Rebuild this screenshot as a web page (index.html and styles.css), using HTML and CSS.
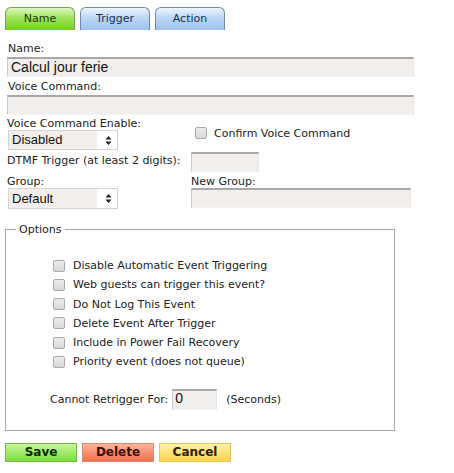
FILE: index.html
```html
<!DOCTYPE html>
<html>
<head>
<meta charset="utf-8">
<link rel="stylesheet" href="styles.css">
</head>
<body>
<div class="page">
  <div class="tabs">
    <div class="tab tab-active">Name</div>
    <div class="tab">Trigger</div>
    <div class="tab">Action</div>
  </div>

  <div class="form">
    <div class="label l-name">Name:</div>
    <div class="input wide">Calcul jour ferie</div>
    <div class="label l-voice">Voice Command:</div>
    <div class="input wide"></div>

    <div class="row r-enable">
      <div class="col-left">
        <div class="label">Voice Command Enable:</div>
        <div class="select"><span>Disabled</span><svg class="arrows" width="7" height="11" viewBox="0 0 7 11"><path d="M3.5 1 L6.5 4.5 H0.5 Z M3.5 10 L6.5 6.5 H0.5 Z" fill="#222"/></svg></div>
      </div>
      <div class="col-right confirm">
        <span class="cb"></span><span class="cb-text">Confirm Voice Command</span>
      </div>
    </div>

    <div class="row r-dtmf">
      <div class="label dtmf-label">DTMF Trigger (at least 2 digits):</div>
      <div class="input small"></div>
    </div>

    <div class="row r-group">
      <div class="col-left">
        <div class="label">Group:</div>
        <div class="select sel-group"><span>Default</span><svg class="arrows" width="7" height="11" viewBox="0 0 7 11"><path d="M3.5 1 L6.5 4.5 H0.5 Z M3.5 10 L6.5 6.5 H0.5 Z" fill="#222"/></svg></div>
      </div>
      <div class="col-right">
        <div class="label">New Group:</div>
        <div class="input group"></div>
      </div>
    </div>

    <fieldset class="options">
      <legend>Options</legend>
      <div class="checks">
        <div class="check"><span class="cb"></span>Disable Automatic Event Triggering</div>
        <div class="check"><span class="cb"></span>Web guests can trigger this event?</div>
        <div class="check"><span class="cb"></span>Do Not Log This Event</div>
        <div class="check"><span class="cb"></span>Delete Event After Trigger</div>
        <div class="check"><span class="cb"></span>Include in Power Fail Recovery</div>
        <div class="check"><span class="cb"></span>Priority event (does not queue)</div>
      </div>
      <div class="retrigger">
        <span class="rt-label">Cannot Retrigger For:</span>
        <div class="input rt">0</div>
        <span class="rt-unit">(Seconds)</span>
      </div>
    </fieldset>

    <div class="buttons">
      <div class="btn save">Save</div>
      <div class="btn delete">Delete</div>
      <div class="btn cancel">Cancel</div>
    </div>
  </div>
</div>
</body>
</html>
```

FILE: styles.css
```css
html, body {
  margin: 0;
  padding: 0;
  background: #ffffff;
}
body {
  font-family: "DejaVu Sans", Verdana, sans-serif;
  font-size: 11px;
  color: #222;
}
.page {
  width: 454px;
  height: 473px;
  position: relative;
  overflow: hidden;
}
.tabs {
  display: flex;
  gap: 5px;
  padding: 7px 0 0 5px;
  height: 23px;
}
.tab {
  width: 68px;
  height: 22px;
  border: 1px solid #6f8aa6;
  border-bottom: none;
  border-radius: 6px 6px 0 0;
  background: linear-gradient(#eef5fd 0%, #bcd6f4 45%, #9ec3ef 100%);
  font-size: 11px;
  color: #13325a;
  text-align: center;
  line-height: 22px;
}
.tab-active {
  border-color: #7c9f56;
  background: linear-gradient(#dff7c2 0%, #9fe45a 45%, #71d21f 100%);
  color: #17380a;
}
.form {
  padding: 0 0 0 7px;
}
.label {
  height: 12px;
  line-height: 12px;
  color: #222;
}
.l-name {
  margin-top: 13px;
  padding-left: 1px;
}
.l-voice {
  margin-top: 4px;
  padding-left: 1px;
}
.input {
  box-sizing: border-box;
  background: #f1eeeb;
  border-top: 2px solid #a8a8a8;
  border-left: 1px solid #c9c9c9;
  border-right: 1px solid #e6e6e6;
  border-bottom: 1px solid #f4f4f4;
  font-family: "Liberation Sans", Arial, sans-serif;
  font-size: 14px;
  color: #111;
  padding-left: 3px;
  line-height: 16px;
}
.wide {
  width: 407px;
  height: 20px;
  margin-top: 2px;
}
.row {
  display: flex;
}
.col-left {
  width: 184px;
}
.r-enable {
  margin-top: 3px;
}
.select {
  box-sizing: border-box;
  width: 110px;
  height: 20px;
  margin-left: 1px;
  border: 1px solid #d4d4d4;
  background: linear-gradient(90deg, #f1eeeb 0, #f1eeeb 88px, #ffffff 88px);
  font-family: "Liberation Sans", Arial, sans-serif;
  font-size: 13px;
  color: #111;
  line-height: 18px;
  padding-left: 3px;
  position: relative;
}
.sel-group {
  height: 21px;
  line-height: 19px;
}
.arrows {
  position: absolute;
  right: 5px;
  top: 4px;
}
.confirm {
  display: flex;
  align-items: center;
  margin-top: 9px;
  height: 12px;
  padding-left: 4px;
}
.cb {
  display: inline-block;
  box-sizing: border-box;
  width: 12px;
  height: 12px;
  border: 1px solid #a9a9a9;
  border-radius: 2px;
  background: linear-gradient(#ececec, #d8d8d8);
  flex: none;
}
.cb-text {
  margin-left: 7px;
}
.r-dtmf {
  margin-top: 2px;
  align-items: flex-end;
}
.dtmf-label {
  width: 184px;
  margin-bottom: 5px;
}
.small {
  width: 68px;
  height: 20px;
}
.r-group {
  margin-top: 4px;
}
.group {
  width: 220px;
  height: 20px;
}
.options {
  box-sizing: border-box;
  width: 390px;
  height: 208px;
  margin: 14px 0 0 -2px;
  padding: 0;
  border: 1px solid #a8a8a8;
}
.options legend {
  margin-left: 10px;
  padding: 0 4px 0 3px;
  font-size: 11px;
  line-height: 13px;
}
.checks {
  margin: 23px 0 0 47px;
  display: flex;
  flex-direction: column;
  gap: 6.3px;
}
.check {
  display: flex;
  align-items: center;
  height: 13px;
}
.check .cb {
  margin-right: 8px;
}
.retrigger {
  display: flex;
  align-items: center;
  margin: 21px 0 0 44px;
}
.rt {
  width: 45px;
  height: 21px;
  margin-left: 4px;
  padding-left: 2px;
  line-height: 14px;
}
.rt-unit {
  margin-left: 9px;
}
.buttons {
  display: flex;
  gap: 5px;
  margin: 12px 0 0 -2px;
}
.btn {
  box-sizing: border-box;
  width: 72px;
  height: 19px;
  font-weight: bold;
  font-size: 12px;
  line-height: 17px;
  text-align: center;
  color: #1a1a00;
}
.save {
  border: 1px solid #79b74a;
  background: linear-gradient(#c6f59c, #79e03a);
  color: #0d2a05;
}
.delete {
  border: 1px solid #d98a70;
  background: linear-gradient(#fcb49a, #f4704e);
  color: #3a0e04;
}
.cancel {
  border: 1px solid #e3c462;
  background: linear-gradient(#fff3a8, #fcd24a);
  color: #2b2000;
}
```
